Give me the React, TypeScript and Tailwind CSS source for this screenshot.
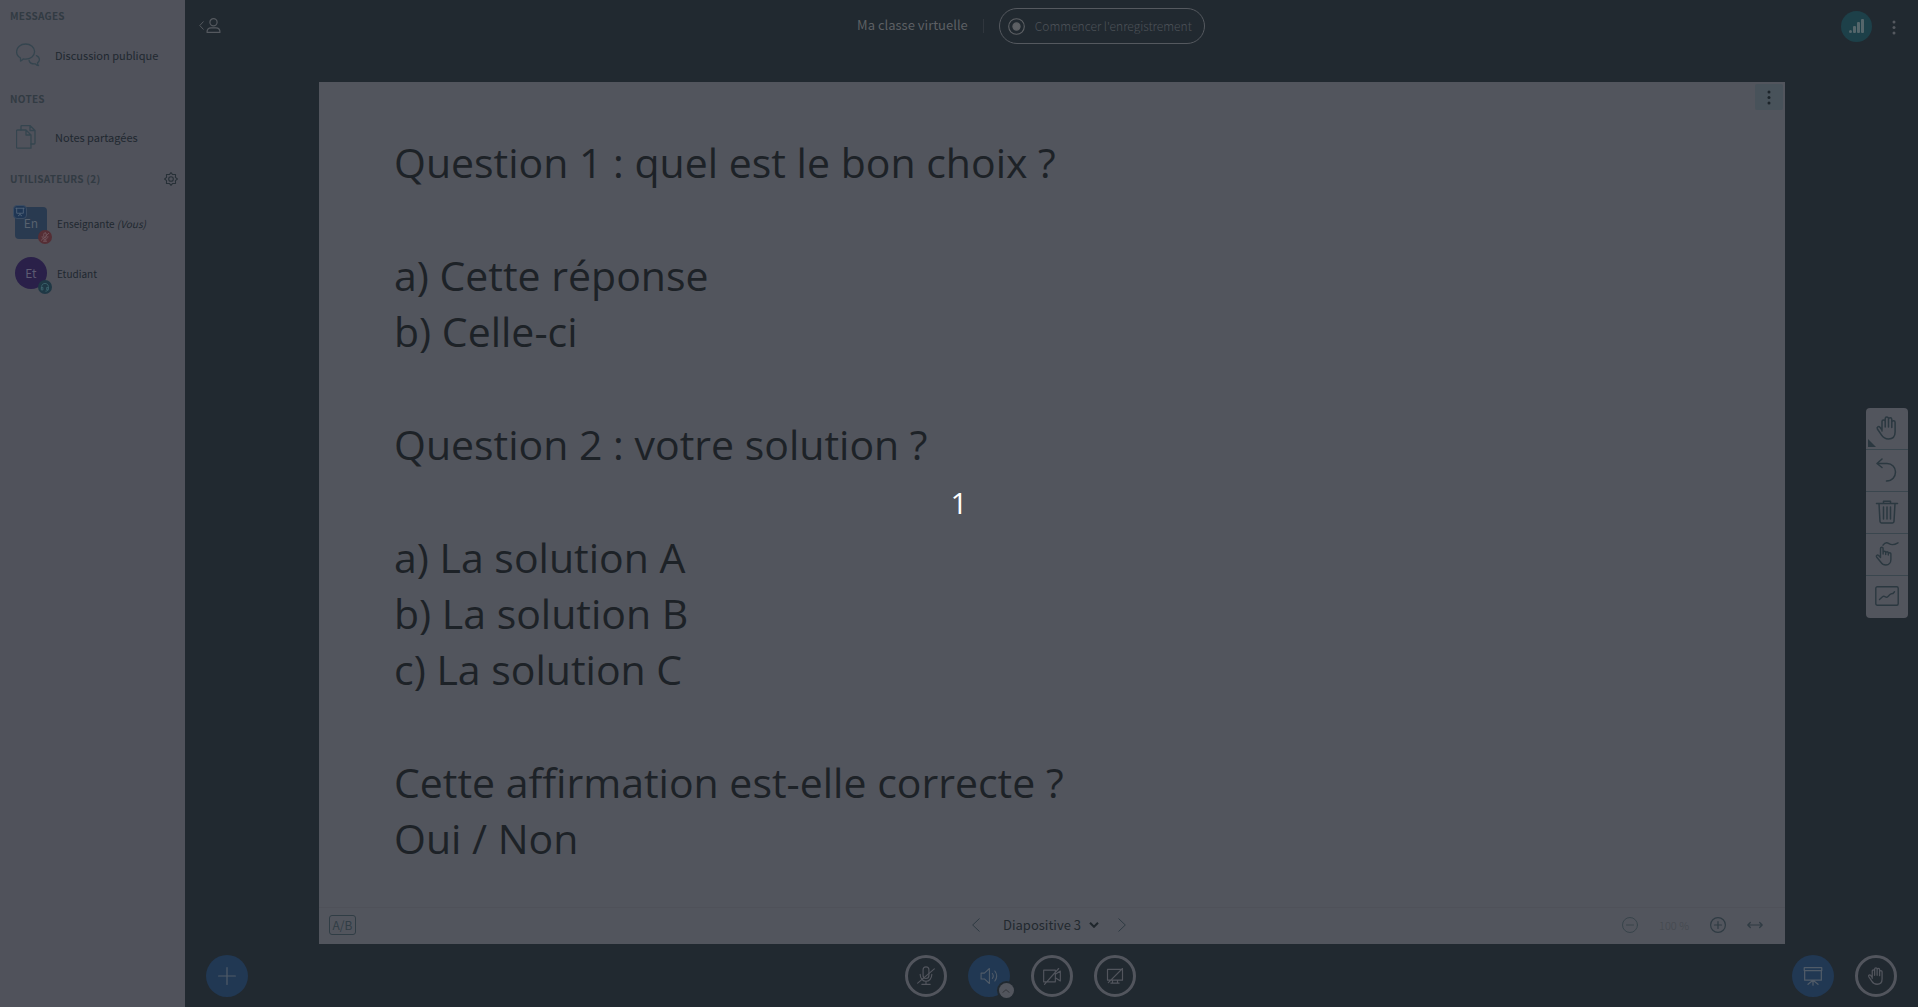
import type { ReactNode } from 'react';

const SLIDE_TEXT: string[][] = [
  ['Question 1 : quel est le bon choix ?'],
  ['a) Cette réponse', 'b) Celle-ci'],
  ['Question 2 : votre solution ?'],
  ['a) La solution A', 'b) La solution B', 'c) La solution C'],
  ['Cette affirmation est-elle correcte ?', 'Oui / Non'],
];

function Icon({ className, box = 24, width = 1.5, children }: { className: string; box?: number; width?: number; children: ReactNode }) {
  return (
    <svg
      className={className}
      viewBox={`0 0 ${box} ${box}`}
      fill="none"
      stroke="currentColor"
      strokeWidth={width}
      strokeLinecap="round"
      strokeLinejoin="round"
      aria-hidden="true"
    >
      {children}
    </svg>
  );
}

function HandPath() {
  return (
    <path d="M7 15V5.500a1.600 1.600 0 0 1 3.200 0V11V2.700a1.650 1.650 0 0 1 3.300 0V11V3.500a1.650 1.650 0 0 1 3.300 0V11.500V6.500a1.650 1.650 0 0 1 3.300 0V16c0 4.300-2.600 7-6.600 7c-3.300 0-5.300-1.200-6.900-3.800L2.400 13c-1-1.900 1.300-3.200 2.500-1.700L7 14" />
  );
}

function SectionTitle({ children }: { children: ReactNode }) {
  return <h2 className="text-[10px] leading-4 font-bold tracking-wide text-[#323b43]">{children}</h2>;
}

function SideLink({ label, icon }: { label: string; icon: ReactNode }) {
  return (
    <button type="button" className="flex h-10 w-full items-center gap-[15px] pl-4 text-left text-[11px] text-[#1f2830]">
      {icon}
      <span>{label}</span>
    </button>
  );
}

function Sidebar() {
  return (
    <aside className="flex w-[185px] shrink-0 flex-col bg-[#50525b] pt-2">
      <div className="pl-[10px]"><SectionTitle>MESSAGES</SectionTitle></div>
      <div className="mt-[11px]">
        <SideLink
          label="Discussion publique"
          icon={
            <Icon className="h-6 w-6 text-[#35454f]" width={1.3}>
              <path d="M4.500 18c.2-1.300.1-2.200-.2-3.200C2 13.500.6 11.600.6 8.800C.6 4.400 4.500 1 9.600 1s9 3.400 9 7.600s-3.900 7.600-9 7.600c-.9 0-1.700-.1-2.400-.3C6.500 17 5.600 17.700 4.500 18Z" />
              <path d="M20.500 12.600c1.800.8 2.900 2.200 2.900 3.900c0 1.400-.7 2.600-1.900 3.400c0 1 .3 1.900 1 2.700c-1.300-.1-2.400-.8-3.100-1.700c-3.200.2-5.800-1.100-6.300-3.400" />
            </Icon>
          }
        />
      </div>
      <div className="mt-4 pl-[10px]"><SectionTitle>NOTES</SectionTitle></div>
      <div className="mt-[10px]">
        <SideLink
          label="Notes partagées"
          icon={
            <Icon className="h-6 w-6 text-[#35454f]" width={1.3}>
              <path d="M1.500 5h8.500l5 5v13.200H1.500a1 1 0 0 1-1-1V6a1 1 0 0 1 1-1ZM10 5v5h5" />
              <path d="M5 5V1.500a1 1 0 0 1 1-1h8l5 5V18a1 1 0 0 1-1 1h-3M14 .5v5h5" />
            </Icon>
          }
        />
      </div>
      <div className="mt-[14px] flex items-center justify-between pr-[7px] pl-[10px]">
        <SectionTitle>UTILISATEURS (2)</SectionTitle>
        <button type="button" aria-label="Gérer les utilisateurs" className="text-[#273037]">
          <Icon className="h-[14px] w-[14px]" width={1.8}>
            <path d="M12 1l2.800 3.400L19.800 4.200l-.2 5L23 12l-3.400 2.800l.2 5l-5-.2L12 23l-2.800-3.400l-5 .2l.2-5L1 12l3.400-2.800l-.2-5l5 .2z" />
            <circle cx="12" cy="12" r="4" />
          </Icon>
        </button>
      </div>
      <ul className="mt-5 flex flex-col gap-[18px] pl-[15px] text-[10px] text-[#1f2830]">
        <li className="flex items-center gap-[10px]">
          <span className="relative flex h-8 w-8 items-center justify-center rounded bg-[#293a50] text-[12px] text-[#58616e]">
            En
            <span className="absolute -top-[2px] -left-[2px] flex h-[14px] w-[14px] items-center justify-center rounded-[4px] border border-[#3b4c62] bg-[#1f3654] text-[#53657a]">
              <Icon className="h-[10px] w-[10px]" width={2}><path d="M2 3h20M4 3v12h16V3M12 15v3M8 21l4-3l4 3" /></Icon>
            </span>
            <span className="absolute -right-[5px] -bottom-[5px] flex h-[14px] w-[14px] items-center justify-center rounded-full bg-[#552e35] text-[#755a61]">
              <Icon className="h-[10px] w-[10px]" width={2}><rect x="9" y="2" width="6" height="12" rx="3" /><path d="M5 11c0 9 14 9 14 0M12 18v4M8 22h8M3 20L21 3" /></Icon>
            </span>
          </span>
          <span>Enseignante <em>(Vous)</em></span>
        </li>
        <li className="flex items-center gap-[10px]">
          <span className="relative flex h-8 w-8 items-center justify-center rounded-full bg-[#2a2049] text-[12px] text-[#5d5b72]">
            Et
            <span className="absolute -right-[5px] -bottom-[5px] flex h-[14px] w-[14px] items-center justify-center rounded-full bg-[#1f3845] text-[#3f6670]">
              <Icon className="h-[10px] w-[10px]" width={2}><path d="M4 15v-4c0-10 16-10 16 0v4M4 13h3v6H4zM17 13h3v6h-3zM19 19c0 2-2 3-5 3" /></Icon>
            </span>
          </span>
          <span>Etudiant</span>
        </li>
      </ul>
    </aside>
  );
}

function Header() {
  return (
    <header className="flex h-[82px] items-start justify-between pt-2 pr-[15px] pl-[14px] text-[#55595f]">
      <button type="button" aria-label="Masquer la liste des utilisateurs" className="flex h-[34px] items-center gap-[2px]">
        <svg className="h-[9px] w-[5px]" viewBox="0 0 5 9" fill="none" stroke="currentColor" aria-hidden="true"><path d="M4.500.5L.8 4.500l3.700 4" /></svg>
        <Icon className="h-[15px] w-[15px]" box={15} width={1.2}>
          <circle cx="7.500" cy="4.300" r="3.600" />
          <path d="M1 14.300c0-3 1.600-4.500 4-4.500h5c2.400 0 4 1.500 4 4.500z" />
        </Icon>
      </button>
      <div className="flex h-9 items-center">
        <h1 className="pb-[2px] text-[13px] font-normal text-[#5d6064]">Ma classe virtuelle</h1>
        <span className="mx-[15px] h-[14px] w-px bg-[#30363d]" />
        <button type="button" className="flex h-9 items-center gap-[10px] rounded-full border border-[#55595f] pr-3 pl-2 text-[12px] font-light text-[#4d5258]">
          <Icon className="h-[17px] w-[17px] text-[#5d6064]" box={17} width={1.1}>
            <circle cx="8.500" cy="8.500" r="7.800" />
            <circle cx="8.500" cy="8.500" r="3.600" fill="currentColor" />
          </Icon>
          Commencer l'enregistrement
        </button>
      </div>
      <div className="flex h-9 items-center gap-[14px]">
        <button type="button" aria-label="État de la connexion" className="flex h-[31px] w-[31px] items-center justify-center rounded-full bg-[#1d4049] text-[#55666b]">
          <svg className="h-[15px] w-[15px]" viewBox="0 0 15 15" fill="currentColor" aria-hidden="true">
            <rect x="0" y="11" width="3" height="3" rx="1.500" /><rect x="4" y="7" width="3" height="7" rx="1" />
            <rect x="8" y="3" width="3" height="11" rx="1" /><rect x="12" y="0" width="3" height="14" rx="1" />
          </svg>
        </button>
        <button type="button" aria-label="Options" className="flex w-[17px] justify-center pt-[2px]"><Dots /></button>
      </div>
    </header>
  );
}

function Dots() {
  return (
    <svg className="h-[15px] w-[4px]" viewBox="0 0 4 15" fill="currentColor" aria-hidden="true">
      <circle cx="2" cy="2" r="1.500" /><circle cx="2" cy="7.500" r="1.500" /><circle cx="2" cy="13" r="1.500" />
    </svg>
  );
}

function Presentation() {
  return (
    <section className="relative flex min-w-0 flex-1 flex-col bg-[#52555d]">
      <button type="button" aria-label="Options de présentation" className="absolute top-[2px] right-[2px] flex h-[26px] w-7 items-center justify-center rounded-[2px] bg-[#48525a] text-[#1c242a]">
        <Dots />
      </button>
      <div className="flex flex-1 flex-col gap-[57px] pt-[52px] pl-[75px] font-['Open_Sans','Noto_Sans',sans-serif] text-[41px] leading-[56px] text-[#1d2227]">
        {SLIDE_TEXT.map((lines) => (
          <div key={lines[0]}>
            {lines.map((line) => <p key={line}>{line}</p>)}
          </div>
        ))}
      </div>
      <div className="grid h-[37px] grid-cols-3 items-center border-t border-[#4f5159] px-[10px] pb-[2px] text-[#2f3b43]">
        <button type="button" className="flex h-5 w-[27px] items-center justify-center rounded-[3px] border border-[#303d45] text-[12px] text-[#303d45]">A/B</button>
        <div className="flex items-center justify-center gap-[19px] pr-[6px]">
          <button type="button" aria-label="Diapositive précédente">
            <svg className="h-[14px] w-2" viewBox="0 0 8 14" fill="none" stroke="currentColor" aria-hidden="true"><path d="M7.500.5L.7 7l6.800 6.500" /></svg>
          </button>
          <label className="flex items-center pl-1">
            <select aria-label="Choisir une diapositive" className="w-[82px] appearance-none bg-transparent text-[13px] text-[#22292f]">
              <option>Diapositive 3</option>
            </select>
            <svg className="ml-1 h-[6px] w-[10px]" viewBox="0 0 10 6" fill="none" stroke="#1f262c" strokeWidth="2" aria-hidden="true"><path d="M1 .8l4 4l4-4" /></svg>
          </label>
          <button type="button" aria-label="Diapositive suivante">
            <svg className="h-[14px] w-2" viewBox="0 0 8 14" fill="none" stroke="currentColor" aria-hidden="true"><path d="M.5.5L7.300 7L.5 13.500" /></svg>
          </button>
        </div>
        <div className="flex items-center justify-end gap-[21px] pr-3">
          <button type="button" aria-label="Zoom arrière" className="text-[#38444b]">
            <Icon className="h-4 w-4" box={16} width={1}><circle cx="8" cy="8" r="7.500" /><path d="M4.500 8h7" /></Icon>
          </button>
          <span className="text-[11px] font-light text-[#43484e]">100 %</span>
          <button type="button" aria-label="Zoom avant">
            <Icon className="h-4 w-4" box={16} width={1.2}><circle cx="8" cy="8" r="7.400" /><path d="M4.500 8h7M8 4.500v7" /></Icon>
          </button>
          <button type="button" aria-label="Ajuster à la largeur">
            <Icon className="h-4 w-4" box={16} width={1.2}><path d="M.8 8h14.400M3.300 5.500L.8 8l2.500 2.500M12.700 5.500L15.200 8l-2.500 2.500" /></Icon>
          </button>
        </div>
      </div>
    </section>
  );
}

function Tool({ label, children }: { label: string; children: ReactNode }) {
  return (
    <button type="button" aria-label={label} className="relative flex h-[42px] w-[42px] items-center justify-center border-b border-[#3a464e] pb-[2px] last:border-b-0">
      {children}
    </button>
  );
}

function Tools() {
  return (
    <div role="toolbar" aria-label="Outils du tableau blanc" className="flex flex-col overflow-hidden rounded bg-[#52555d] text-[#2b3840]">
      <Tool label="Déplacer">
        <Icon className="h-6 w-6" width={1.5}><HandPath /></Icon>
        <svg className="absolute bottom-[2px] left-[2px] h-2 w-2" viewBox="0 0 8 8" fill="currentColor" aria-hidden="true"><path d="M0 0v8h8z" /></svg>
      </Tool>
      <Tool label="Annuler">
        <Icon className="h-6 w-6" width={1.5}><path d="M7 1L2 5.500l5 4M2 5.500h10c5 0 8.500 3.800 8.500 8.500c0 4.500-3.200 9-9 9" /></Icon>
      </Tool>
      <Tool label="Tout effacer">
        <Icon className="h-6 w-6" width={1.5}><path d="M1.500 3.500h21M8.500 3.500V1.200h7v2.300M4 3.500l1 18a1.500 1.500 0 0 0 1.500 1.400h11a1.500 1.500 0 0 0 1.500-1.400l1-18M8.500 7v12M12 7v12M15.500 7v12" /></Icon>
      </Tool>
      <Tool label="Mode multi-utilisateur">
        <Icon className="h-6 w-6" width={1.4}>
          <path d="M5.500 15V6.500a1.300 1.300 0 0 1 2.600 0V12V10.500a1.300 1.300 0 0 1 2.600 0V12.500V11a1.300 1.300 0 0 1 2.600 0V13V12a1.300 1.300 0 0 1 2.600 0V17.500c0 3-1.800 5.500-5 5.500c-2.400 0-3.800-.8-5-2.700L1.600 15c-.9-1.500 1-2.700 2-1.400L5.500 15.500" />
          <path d="M8 3.200C10 .2 12.200 .4 14 1.600s5 1.500 9-.8" />
        </Icon>
      </Tool>
      <Tool label="Sondage">
        <Icon className="h-6 w-6" width={1.4}><rect x=".8" y="2.800" width="22.400" height="18.400" rx="1.500" /><path d="M4.500 15.500l3-2.800c1-.8 1.800-.6 2.700.1s1.800.8 2.800-.3L15 10.500c1-.9 2-.9 3-1l1.500-1.700" /></Icon>
      </Tool>
    </div>
  );
}

function RoundButton({ label, filled, children }: { label: string; filled?: boolean; children: ReactNode }) {
  return (
    <button
      type="button"
      aria-label={label}
      className={
        filled
          ? 'relative flex h-[42px] w-[42px] items-center justify-center rounded-full bg-[#213853] text-[#505b68]'
          : 'relative flex h-[42px] w-[42px] items-center justify-center rounded-full border-3 border-[#52555d] text-[#52555d]'
      }
    >
      {children}
    </button>
  );
}

function ActionsBar() {
  return (
    <footer className="flex justify-between px-[21px] pt-[11px] pb-[10px]">
      <RoundButton label="Actions" filled>
        <Icon className="h-[18px] w-[18px]" box={18} width={1.2}><path d="M9 .6v16.800M.6 9h16.800" /></Icon>
      </RoundButton>
      <div className="flex gap-[21px]">
        <RoundButton label="Activer le micro">
          <Icon className="h-5 w-5" width={1.4}><rect x="8.500" y="1" width="7" height="14" rx="3.500" /><path d="M5 10c0 11 14 11 14 0M12 18.300V22M7 22h10M2 20.500L22 3.500" /></Icon>
        </RoundButton>
        <RoundButton label="Quitter l'audio" filled>
          <Icon className="h-5 w-5" width={1.3}><path d="M2.500 8.500h4L12.500 3v18l-6-5.500h-4zM16 9c1.500 2 1.500 4 0 6M19 6c3 4 3 8 0 12" /></Icon>
          <span className="absolute -right-1 -bottom-px flex h-[15px] w-[15px] items-center justify-center rounded-full bg-[#52555d] text-[#34373d] ring-2 ring-[#212930]">
            <svg className="h-1 w-2" viewBox="0 0 8 4" fill="none" stroke="currentColor" aria-hidden="true"><path d="M.5 3.700L4 .7l3.500 3" /></svg>
          </span>
        </RoundButton>
        <RoundButton label="Partager la webcam">
          <Icon className="h-5 w-5" width={1.4}><path d="M2 5h14v14H2zM16 10l6-4v12l-6-4M3 22L20 3" /></Icon>
        </RoundButton>
        <RoundButton label="Partager l'écran">
          <Icon className="h-5 w-5" width={1.4}><path d="M3 4h18v13H3zM9 17v3M15 17v3M7 20.500h10M4 20L21 3" /></Icon>
        </RoundButton>
      </div>
      <div className="flex gap-[21px]">
        <RoundButton label="Masquer la présentation" filled>
          <Icon className="h-5 w-5" width={1.5}><path d="M1.500 2h21v3.500h-21zM2 5.500V17h20V5.500M12 17v6M12 17l-6 5M12 17l6 5" /></Icon>
        </RoundButton>
        <RoundButton label="Lever la main">
          <Icon className="h-[18px] w-[18px]" width={1.7}><HandPath /></Icon>
        </RoundButton>
      </div>
    </footer>
  );
}

export default function App() {
  return (
    <div className="relative flex min-h-screen bg-[#212930] font-['Noto_Sans_CJK_SC','Noto_Sans',sans-serif]">
      <Sidebar />
      <main className="flex min-w-0 flex-1 flex-col">
        <Header />
        <div className="flex flex-1 pl-[134px]">
          <Presentation />
          <div className="flex w-[133px] shrink-0 items-center justify-end pr-[10px]">
            <Tools />
          </div>
        </div>
        <ActionsBar />
      </main>
      <div className="pointer-events-none absolute inset-0 flex items-center justify-center pb-[2px]">
        <span className="font-['Open_Sans','Noto_Sans',sans-serif] text-[30px] leading-none text-white">1</span>
      </div>
    </div>
  );
}
